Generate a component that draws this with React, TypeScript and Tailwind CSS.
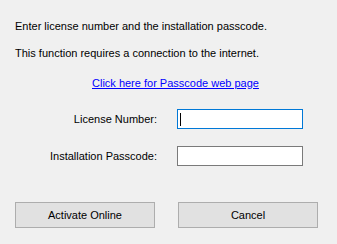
import React from 'react';

const font = { fontFamily: '"Liberation Sans", Arial, sans-serif' };

export default function App() {
  return (
    <div
      className="w-[337px] h-[244px] bg-[#f0f0f0] text-black text-[11px] leading-[14px] flex flex-col"
      style={font}
    >
      <p className="mt-[19px] ml-[15px]">Enter license number and the installation passcode.</p>
      <p className="mt-[13px] ml-[15px]">This function requires a connection to the internet.</p>
      <div className="mt-[16px] ml-[92px]">
        <a href="#" className="text-[#0000ff] underline">Click here for Passcode web page</a>
      </div>

      {/* Fields */}
      <div className="mt-[19px] flex flex-col gap-[17px]">
        <div className="flex items-center">
          <label className="w-[157px] text-right">License Number:</label>
          <div className="ml-[20px] w-[126px] h-[20px] bg-white border border-[#0078d7] flex items-center pl-[2px]">
            <span className="w-px h-[13px] bg-black" />
          </div>
        </div>
        <div className="flex items-center">
          <label className="w-[157px] text-right">Installation Passcode:</label>
          <div className="ml-[20px] w-[126px] h-[20px] bg-white border border-[#7a7a7a]" />
        </div>
      </div>

      {/* Buttons */}
      <div className="mt-[36px] ml-[15px] flex gap-[23px]">
        <button className="w-[140px] h-[26px] bg-[#e1e1e1] border border-[#adadad]">Activate Online</button>
        <button className="w-[140px] h-[26px] bg-[#e1e1e1] border border-[#adadad]">Cancel</button>
      </div>
    </div>
  );
}
